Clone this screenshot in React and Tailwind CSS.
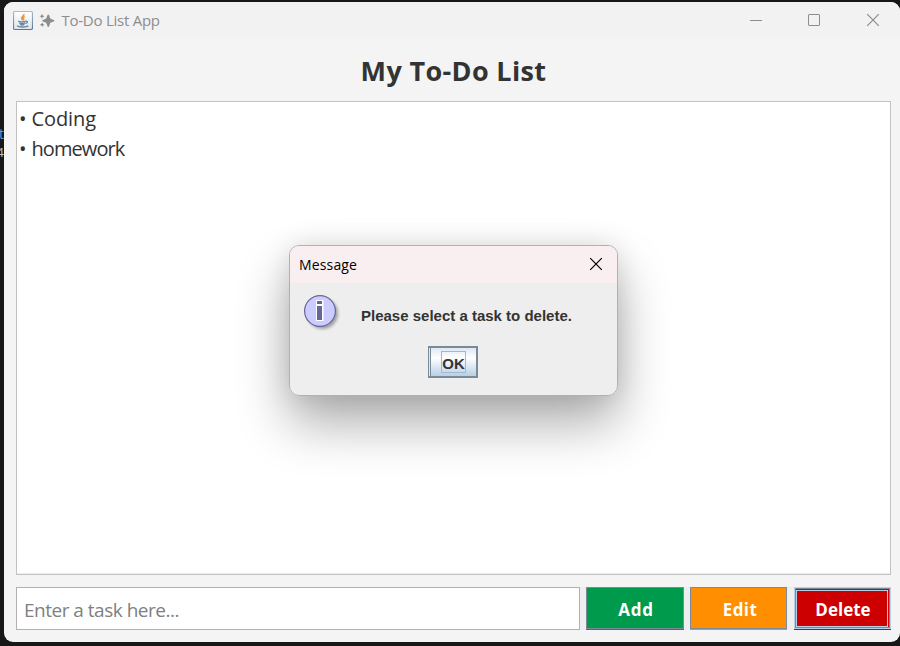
const segoe = "font-['Open_Sans','Noto_Sans',sans-serif]";

function JavaIcon() {
  return (
    <svg width="20" height="20" viewBox="0 0 20 20" className="shrink-0">
      <defs>
        <linearGradient id="java-bg" x1="0" y1="0" x2="0" y2="1">
          <stop offset="0" stopColor="#ffffff" />
          <stop offset="1" stopColor="#dfe5ea" />
        </linearGradient>
        <linearGradient id="java-edge" x1="0" y1="0" x2="0" y2="1">
          <stop offset="0" stopColor="#a9bccb" />
          <stop offset="1" stopColor="#56789a" />
        </linearGradient>
      </defs>
      <rect x="0.5" y="0.5" width="19" height="18" rx="1.5" fill="url(#java-bg)" stroke="url(#java-edge)" strokeWidth="1.2" />
      <path d="M10.8 3c.8 1.8-2.6 2.6-2.2 4.3.2.9 1 1.2 1.1 2M11.7 5.4c-1.5.6-1.9 1.3-1.2 2.2.4.6.2 1.2-.3 1.7" fill="none" stroke="#f0954a" strokeWidth="1.6" />
      <path d="M5.2 10.1c1.5 1 6 .9 7.6.1M6.2 11.9c1.4.8 4.6.8 6 0M7 13.4c1 .6 3.3.6 4.4 0M12.9 10.2c2-.5 2.2 1.5-.3 2.3M4 14.8c1.8 1.7 9.7 1.5 11.2-.1" fill="none" stroke="#6d8aa3" strokeWidth="1.3" />
    </svg>
  );
}

function Sparkles() {
  return (
    <svg width="16" height="16" viewBox="0 0 16 16" className="shrink-0" fill="#8d8d8d">
      <path d="M9.3 1.4Q9.9 1.4 10.1 2.1L11.3 5.6 14.7 6.9Q15.4 7.2 15.4 7.7 15.4 8.2 14.7 8.5L11.3 9.8 10.1 13.2Q9.9 13.9 9.3 13.9 8.7 13.9 8.5 13.2L7.2 9.8 3.9 8.5Q3.3 8.2 3.3 7.7 3.3 7.2 3.9 6.9L7.2 5.6 8.5 2.1Q8.7 1.4 9.3 1.4Z" />
      <path d="M3 .8 3.8 2.5 5.5 3.3 3.8 4.1 3 5.8 2.2 4.1.5 3.3 2.2 2.5Z" />
      <path d="M3.2 9.4 4 11 5.5 11.8 4 12.6 3.2 14.1 2.4 12.6.8 11.8 2.4 11Z" />
    </svg>
  );
}

function CloseIcon({ className }) {
  return (
    <svg width="14" height="14" viewBox="0 0 14 14" className={className} fill="none" stroke="currentColor" strokeWidth="1.2">
      <path d="M1.2 1.2 12.8 12.8M12.8 1.2 1.2 12.8" />
    </svg>
  );
}

function InfoIcon() {
  return (
    <svg width="38" height="38" viewBox="0 0 38 38" className="shrink-0 overflow-visible">
      <circle cx="18.5" cy="18.5" r="15.5" fill="#000000" opacity="0.32" className="blur-[1.5px]" />
      <circle cx="16" cy="16" r="15.4" fill="#ccccff" stroke="#666699" strokeWidth="1.2" />
      <path d="M12 5h7v5h-7zM12 10h7v16h-7z" fill="#ffffff" />
      <path d="M13 6h5v3h-5zM13 11h5v14h-5z" fill="#666699" />
      <path d="M19 5h1v21h-1z" fill="#e6e6ff" />
    </svg>
  );
}

function TitleBar() {
  return (
    <header className={`${segoe} flex h-[37px] items-center bg-[#f2f2f2] pl-[9px] text-[#8d8d8d]`}>
      <JavaIcon />
      <span className="w-[6px]" />
      <Sparkles />
      <span className="mb-[2px] ml-[6.5px] text-[15px] leading-5 tracking-[-0.25px]">To-Do List App</span>
      <div className="mb-px ml-auto flex items-center text-[#8d8d8d]">
        <span className="mr-[46px] h-px w-3 bg-[#8d8d8d]" />
        <span className="mr-[46px] size-3 rounded-[1px] border border-[#8d8d8d]" />
        <CloseIcon className="mr-5" />
      </div>
    </header>
  );
}

function Dialog() {
  return (
    <section className="absolute left-[289px] top-[245px] flex h-[151px] w-[329px] flex-col overflow-hidden rounded-[10px] border border-[#b1b1b1] bg-[#eeeeee]">
      <div className={`${segoe} flex h-[37px] shrink-0 items-center justify-between bg-[#f9eff1] pl-[9px] pr-[14px] text-[14px] text-black`}>
        <span className="tracking-[0.15px]">Message</span>
        <CloseIcon className="mb-[2px]" />
      </div>
      <div className="flex pl-[14px] pt-[12px]">
        <InfoIcon />
        <p className="ml-[19px] mt-[11px] font-['Liberation_Sans',sans-serif] text-[15px] font-bold leading-5 text-[#333333]">
          Please select a task to delete.
        </p>
      </div>
      <button className="ml-[138px] mt-[13px] flex h-8 w-[50px] shrink-0 items-start border-2 border-l border-[#7a8a99] bg-linear-to-b from-[#dde8f3] via-white via-35% to-[#b8cfe5] pl-[12px] pt-[3px] font-['Liberation_Sans',sans-serif] text-[15px] font-bold text-[#333333] shadow-[inset_1px_0_0_#dde8f3,inset_2px_0_0_#7a8a99]">
        <span className="flex h-[22px] w-[25px] items-center justify-center border border-[#a3b8cc] leading-none">
          <span className="pt-[2px]">OK</span>
        </span>
      </button>
    </section>
  );
}

function Action({ label, className, frame }) {
  return (
    <button className={`${segoe} ${className} flex h-[43px] flex-col text-[17px] font-bold text-white`}>
      <span className={`flex h-[42px] w-full ${frame}`}>{label}</span>
    </button>
  );
}

export default function App() {
  return (
    <div className="relative h-[646px] w-[900px] overflow-hidden bg-[#181717] pl-1 pt-0.5">
      <span className={`${segoe} absolute right-[896px] top-[123px] text-[14px] text-[#4fa3df]`}>ot</span>
      <span className={`${segoe} absolute right-[896px] top-[143px] text-[13px] text-[#b9c6ce]`}>4</span>
      <main className="relative flex h-[640px] flex-col overflow-hidden rounded-[9px] bg-[#f4f4f4]">
        <TitleBar />
        <h1 className={`${segoe} flex h-[62px] items-center justify-center pl-[3px] pt-[3px] text-[27px] font-bold tracking-[0.35px] text-[#333333]`}>
          My To-Do List
        </h1>
        <ul className={`${segoe} ml-3 mr-[9px] h-[474px] border border-[#c2c2c2] bg-white px-[2px] pt-[2px] text-[20px] leading-[30px] text-[#333333] shadow-[inset_0_-1px_0_#eeeeee]`}>
          <li className="tracking-[-0.1px]">• Coding</li>
          <li className="tracking-[-0.9px]">• <span className="ml-[1.5px]">homework</span></li>
        </ul>
        <div className="ml-3 mr-[9px] mt-3 flex">
          <div className="flex w-[570px] bg-[#eeeeee]">
            <input
              placeholder="Enter a task here..."
              className={`${segoe} h-[43px] w-[564px] border border-[#b1b1b1] bg-white px-[7px] pt-[2px] text-[19px] tracking-[-0.5px] text-[#333333] placeholder-[#808080] outline-none`}
            />
          </div>
          <Action label="Add" className="w-[98px] bg-[#009a4c] tracking-[0.8px]" frame="items-center justify-center pt-[3px] pl-[2px] border border-[#7a8a99]" />
          <span className="w-[6px] bg-[#eeeeee]" />
          <Action label="Edit" className="w-[97px] bg-[#ff8f00] tracking-[0.4px]" frame="items-center justify-center pt-[3px] pl-[3px] border border-[#7a8a99]" />
          <span className="w-[7px] bg-[#eeeeee]" />
          <Action
            label={<span className="flex h-[37px] w-[92px] items-center justify-center border border-[#b8cfe5] pl-[2px] pt-[3px]">Delete</span>}
            className="w-[97px] bg-[#cc0000]"
            frame="items-start pl-px pt-[2px] border border-[#b8cfe5] shadow-[inset_0_0_0_1px_#7a8a99]"
          />
        </div>
      </main>
      <div className="pointer-events-none absolute left-[289px] top-[245px] h-[151px] w-[329px] rounded-[10px] shadow-[0_27px_52px_rgba(0,0,0,0.33),0_0_26px_rgba(0,0,0,0.1)]" />
      <Dialog />
    </div>
  );
}
